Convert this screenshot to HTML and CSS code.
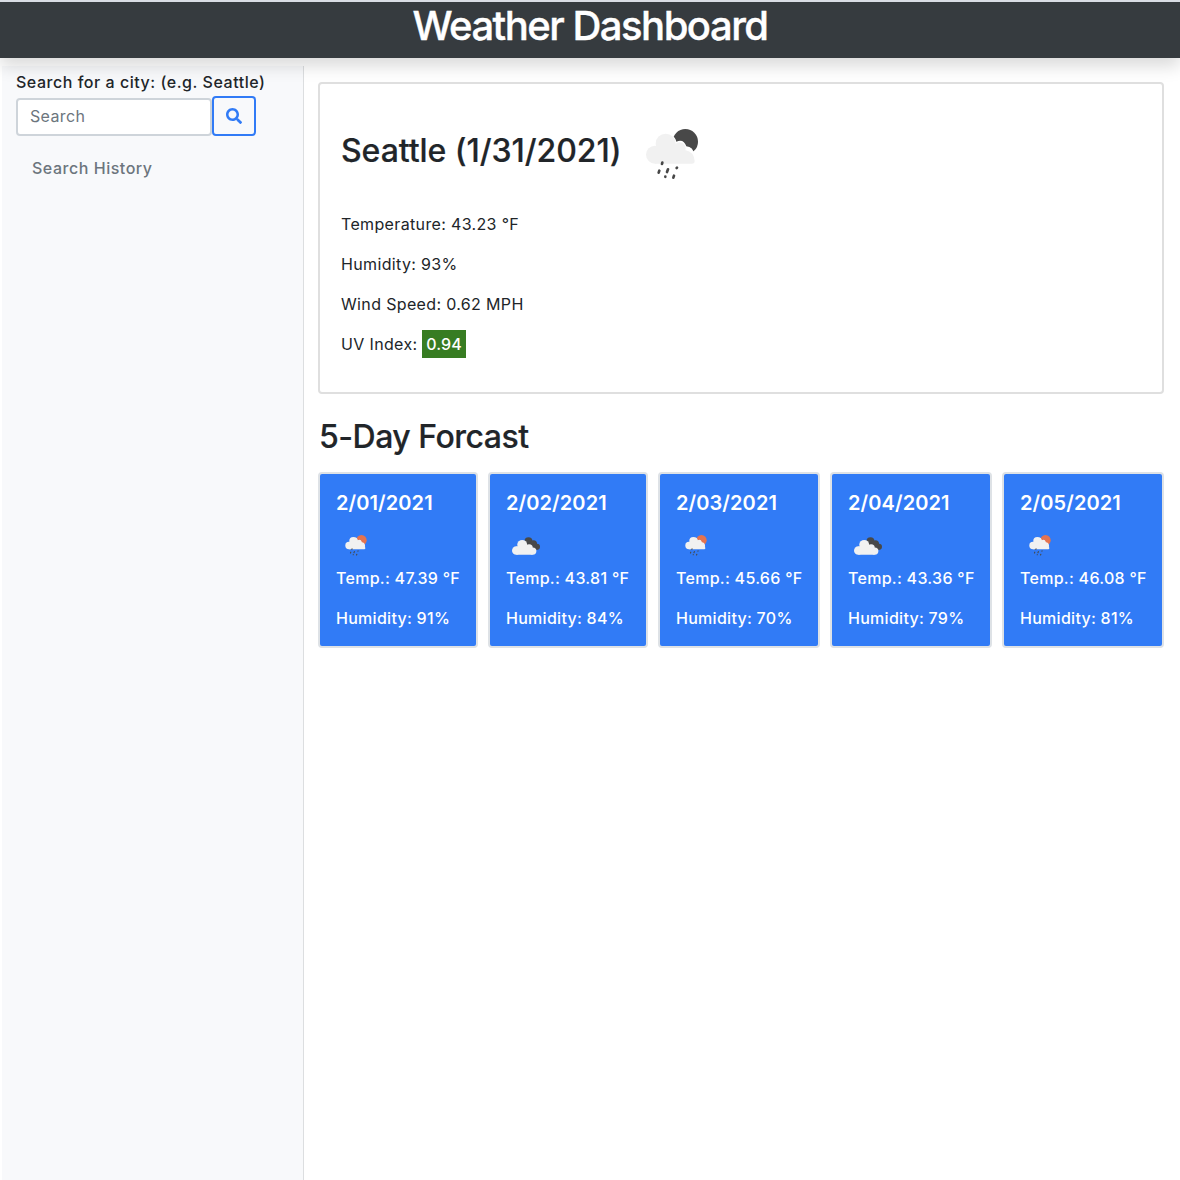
FILE: index.html
```html
<!DOCTYPE html>
<html lang="en">
<head>
<meta charset="utf-8">
<title>Weather Dashboard</title>
<link rel="stylesheet" href="styles.css">
</head>
<body>
<svg class="sprites" width="0" height="0" aria-hidden="true">
  <symbol id="cloud-rain" viewBox="48 56 156 153">
    <circle class="orb" cx="166" cy="94" r="38"/>
    <path class="halo" d="M124 74q12 6 15 20q22-10 30 14q21 2 23 24v10h-68z"/>
    <g class="cloud">
      <circle cx="75" cy="133" r="27"/>
      <circle cx="107" cy="100" r="30"/>
      <circle cx="149" cy="114" r="18"/>
      <path d="M75 108h74l18 12q24 4 27 32q0 8-8 8H75z"/>
    </g>
    <path class="drops" d="M97 157l-1 4M88 181l-2 6M114 177l-3 8M141 172l-1 1M106 199l0 .5M132 196l-2 6"/>
  </symbol>
  <symbol id="clouds" viewBox="96 217 85 53">
    <g class="back-cloud">
      <circle cx="146" cy="229" r="12"/>
      <circle cx="161" cy="237" r="11"/>
      <circle cx="172" cy="246" r="9"/>
      <path d="M140 236h20l16 18h-20z"/>
    </g>
    <g class="cloud">
      <circle cx="109" cy="257" r="13"/>
      <circle cx="127" cy="240" r="15"/>
      <circle cx="148" cy="249" r="11"/>
      <circle cx="159" cy="259" r="11"/>
      <path d="M109 245h39l11 25h-50z"/>
    </g>
  </symbol>
</svg>
<header class="topbar"><h1>Weather Dashboard</h1></header>
<div class="layout">
  <aside class="sidebar">
    <label class="search-label" for="city">Search for a city: (e.g. Seattle)</label>
    <div class="search">
      <input id="city" type="text" placeholder="Search">
      <button type="button" aria-label="Search"><svg width="16" height="16" viewBox="0 0 512 512"><path fill="currentColor" d="M505 442.700L405.300 343c-4.500-4.500-10.600-7-17-7H372c27.600-35.300 44-79.700 44-128C416 93.100 322.900 0 208 0S0 93.100 0 208s93.100 208 208 208c48.300 0 92.700-16.400 128-44v16.300c0 6.400 2.500 12.500 7 17l99.700 99.700c9.400 9.400 24.600 9.400 33.900 0l28.300-28.300c9.400-9.400 9.400-24.600.1-34zM208 336c-70.700 0-128-57.200-128-128 0-70.700 57.200-128 128-128 70.700 0 128 57.200 128 128 0 70.700-57.200 128-128 128z"/></svg></button>
    </div>
    <h2 class="history">Search History</h2>
  </aside>
  <main class="content">
    <section class="current">
      <h2 class="heading"><span>Seattle (1/31/2021)</span><svg class="night" width="52" height="51"><use href="#cloud-rain"/></svg></h2>
      <p>Temperature: 43.23 °F</p>
      <p>Humidity: 93%</p>
      <p>Wind Speed: 0.62 MPH</p>
      <p>UV Index: <span class="uv">0.94</span></p>
    </section>
    <h2 class="heading forecast-title">5-Day Forcast</h2>
    <section class="forecast">
      <article class="day"><h3>2/01/2021</h3><svg class="rain"><use href="#cloud-rain"/></svg><p>Temp.: 47.39 °F</p><p>Humidity: 91%</p></article>
      <article class="day"><h3>2/02/2021</h3><svg class="overcast"><use href="#clouds"/></svg><p>Temp.: 43.81 °F</p><p>Humidity: 84%</p></article>
      <article class="day"><h3>2/03/2021</h3><svg class="rain"><use href="#cloud-rain"/></svg><p>Temp.: 45.66 °F</p><p>Humidity: 70%</p></article>
      <article class="day"><h3>2/04/2021</h3><svg class="overcast"><use href="#clouds"/></svg><p>Temp.: 43.36 °F</p><p>Humidity: 79%</p></article>
      <article class="day"><h3>2/05/2021</h3><svg class="rain"><use href="#cloud-rain"/></svg><p>Temp.: 46.08 °F</p><p>Humidity: 81%</p></article>
    </section>
  </main>
</div>
</body>
</html>
```
FILE: styles.css
```css
* { box-sizing: border-box; }

body {
  margin: 0;
  min-height: 1180px;
  display: flex;
  flex-direction: column;
  background: #fff;
  color: #212529;
  font: 400 16px/24px Inter, "Liberation Sans", sans-serif;
  letter-spacing: 0.53px;
}

h1, h2, h3, p { margin: 0; }
.sprites { position: absolute; }

.topbar {
  position: relative;
  height: 58px;
  border-top: 2px solid #d9dde4;
  background: #363b3f;
  box-shadow: 0 8px 16px rgba(0, 0, 0, .15);
  color: #fff;
  text-align: center;
}
.topbar h1 {
  font-size: 40px;
  line-height: 48px;
  font-weight: 500;
  letter-spacing: -1.5px;
  -webkit-text-stroke: 0.4px #fff;
}

.layout { flex: 1; display: flex; }

.sidebar {
  width: 302px;
  margin: 8px 0 0 2px;
  padding: 4px 14px;
  border-right: 1px solid #dcdee0;
  background: #f8f9fb;
}
.search-label { display: block; font-weight: 500; }
.search { display: flex; align-items: flex-end; margin-top: 2px; }
.search input {
  width: 196px;
  height: 38px;
  padding: 0 12px 2px;
  border: 2px solid #ced4da;
  border-radius: 4px;
  background: #fff;
  font: inherit;
  letter-spacing: 0.35px;
}
.search input::placeholder { color: #6c757d; opacity: 1; }
.search button {
  width: 44px;
  height: 40px;
  padding: 0;
  display: grid;
  place-items: center;
  border: 2px solid #317bf6;
  border-radius: 4px;
  background: transparent;
  color: #317bf6;
}
.history { margin: 20px 16px 0; font-size: 16px; font-weight: 500; color: #6c757d; }

.content { flex: 1; padding: 24px 16px 0 14px; }
.current {
  height: 312px;
  padding: 45px 21px 0;
  border: 2px solid #dfdfdf;
  border-radius: 4px;
}
.current p { margin-bottom: 16px; letter-spacing: 0.35px; }
.heading { font-size: 32px; line-height: 38px; font-weight: 500; letter-spacing: -0.06px; -webkit-text-stroke: 0.2px #212529; }
.current .heading { display: flex; height: 83px; }
.current .heading span { width: 305px; padding-top: 3px; }
.uv { padding: 4px; background: #377c22; color: #fff; font-weight: 500; letter-spacing: 0.1px; }
.content > .forecast-title { margin: 24px 0 16px; padding-left: 1px; letter-spacing: -0.5px; }

.forecast { display: grid; grid-template-columns: 160px 160px 162px 162px 162px; gap: 10px; }
.day {
  height: 176px;
  padding: 17px 14px 0 16px;
  border: 2px solid #dee2e6;
  border-radius: 4px;
  background: #317bf6;
  color: #fff;
  font-weight: 500;
  white-space: nowrap;
}
.day h3 { font-size: 20px; line-height: 24px; font-weight: 600; letter-spacing: 0.1px; }
.day svg { display: block; }
.day p { margin-bottom: 16px; letter-spacing: 0.28px; }
.day .rain { width: 22px; height: 21px; margin: 20px 0 10px 9px; }
.day .overcast { width: 28px; height: 18px; margin: 22px 0 11px 6px; }

.cloud { fill: #f1f1f1; }
.back-cloud { fill: #484848; }
.orb { fill: var(--orb, #e37350); }
.halo { fill: var(--halo, #f1f1f1); }
.drops { fill: none; stroke: #484848; stroke-width: 8; stroke-linecap: round; }
.night { --orb: #484848; --halo: #fff; }
.heading svg { -webkit-text-stroke: 0; }
```
